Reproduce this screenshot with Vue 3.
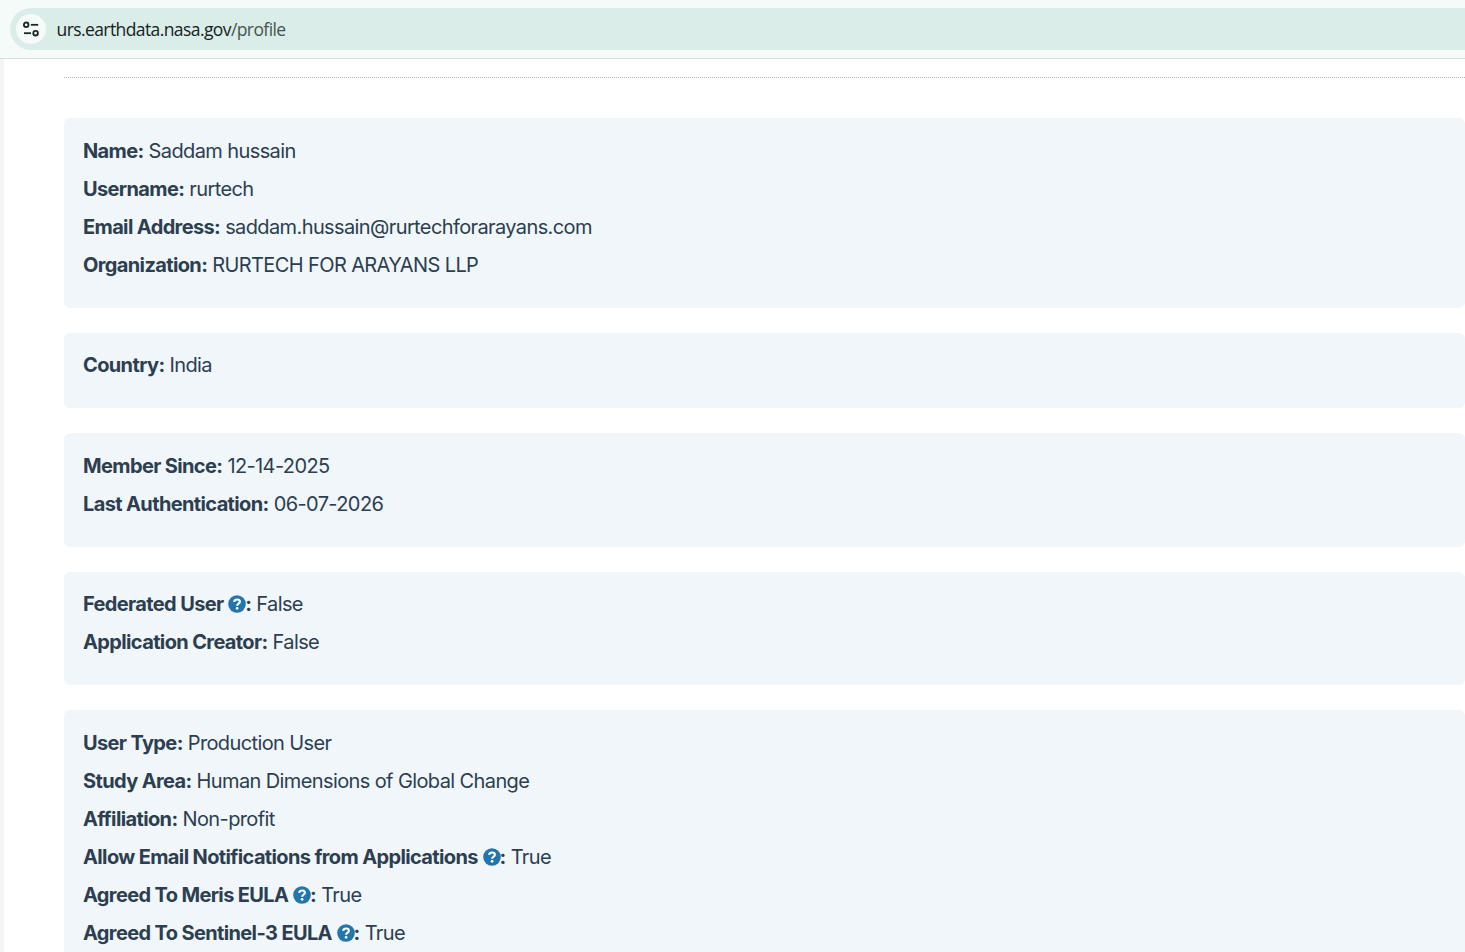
<script setup>
const groups = [
  [
    { label: 'Name', value: 'Saddam hussain' },
    { label: 'Username', value: 'rurtech' },
    { label: 'Email Address', value: 'saddam.hussain@rurtechforarayans.com' },
    { label: 'Organization', value: 'RURTECH FOR ARAYANS LLP' },
  ],
  [{ label: 'Country', value: 'India' }],
  [
    { label: 'Member Since', value: '12-14-2025' },
    { label: 'Last Authentication', value: '06-07-2026' },
  ],
  [
    { label: 'Federated User', value: 'False', help: true },
    { label: 'Application Creator', value: 'False' },
  ],
  [
    { label: 'User Type', value: 'Production User' },
    { label: 'Study Area', value: 'Human Dimensions of Global Change' },
    { label: 'Affiliation', value: 'Non-profit' },
    { label: 'Allow Email Notifications from Applications', value: 'True', help: true },
    { label: 'Agreed To Meris EULA', value: 'True', help: true },
    { label: 'Agreed To Sentinel-3 EULA', value: 'True', help: true },
  ],
]
</script>

<template>
  <div class="window">
    <header class="toolbar">
      <div class="omnibox">
        <span class="site-info">
          <svg width="18" height="18" viewBox="0 0 18 18" fill="none" stroke="#1b2623" stroke-width="1.8">
            <circle cx="4.2" cy="4.8" r="2.3" />
            <path d="M8.9 4.8H16.2" />
            <path d="M2 13.2H9" />
            <circle cx="13.6" cy="13.2" r="2.3" />
          </svg>
        </span>
        <span class="url">urs.earthdata.nasa.gov<span class="path">/profile</span></span>
      </div>
    </header>
    <main class="page">
      <div class="divider"></div>
      <section v-for="(group, g) in groups" :key="g" class="card">
        <p v-for="row in group" :key="row.label" class="row">
          <b>{{ row.label }}<template v-if="row.help">{{ ' ' }}<svg class="help" viewBox="0 0 18 18">
            <circle cx="9" cy="9" r="8.8" fill="#2276ac" />
            <path d="M6.1 6.9C6.4 5.2 7.5 4.5 9.1 4.5C10.8 4.5 11.9 5.4 11.9 6.8C11.9 8.7 9.1 8.6 9.1 10.7" fill="none" stroke="#fff" stroke-width="2.1" />
            <circle cx="9.1" cy="13.3" r="1.35" fill="#fff" />
          </svg></template>:</b>{{ ' ' }}<span>{{ row.value }}</span>
        </p>
      </section>
    </main>
  </div>
</template>

<style>
body {
  margin: 0;
  overflow: hidden;
}
</style>

<style scoped>
.window {
  height: 952px;
  overflow: hidden;
  background: #fff;
}
.toolbar {
  box-sizing: border-box;
  height: 59px;
  padding: 8px 0 0 10px;
  background: #f4fbf8;
  border-bottom: 1px solid #d5e0dc;
}
.omnibox {
  display: flex;
  align-items: center;
  box-sizing: border-box;
  height: 42px;
  padding-left: 6px;
  background: #daede8;
  border-radius: 21px 0 0 21px;
}
.site-info {
  display: flex;
  align-items: center;
  justify-content: center;
  width: 30px;
  height: 30px;
  border-radius: 50%;
  background: #f4fbf8;
}
.url {
  margin-left: 10.5px;
  font: 17.5px/24px "Open Sans", "Noto Sans", sans-serif;
  letter-spacing: -0.59px;
  color: #16211e;
  white-space: nowrap;
}
.path {
  color: #46544f;
}
.page {
  box-sizing: border-box;
  height: 893px;
  padding: 18px 0 0 60px;
  border-left: 4px solid #f5f5f5;
  overflow: hidden;
}
.divider {
  height: 1px;
  margin-bottom: 40px;
  background: repeating-linear-gradient(90deg, #b5b5b5 0 1px, #fff 1px 2px);
}
.card {
  padding: 13.65px 19px 23.95px;
  margin-bottom: 25px;
  background: #f0f6fa;
  border-radius: 6px;
}
.row {
  margin: 0;
  height: 38px;
  font: 400 20px/38px Inter, sans-serif;
  letter-spacing: -0.61px;
  color: #2c3e50;
  white-space: nowrap;
}
.row b {
  font-weight: 700;
  letter-spacing: -0.63px;
}
.help {
  width: 18px;
  height: 18px;
  margin: 0 -1px 0 0.6px;
  vertical-align: -2px;
}
</style>
